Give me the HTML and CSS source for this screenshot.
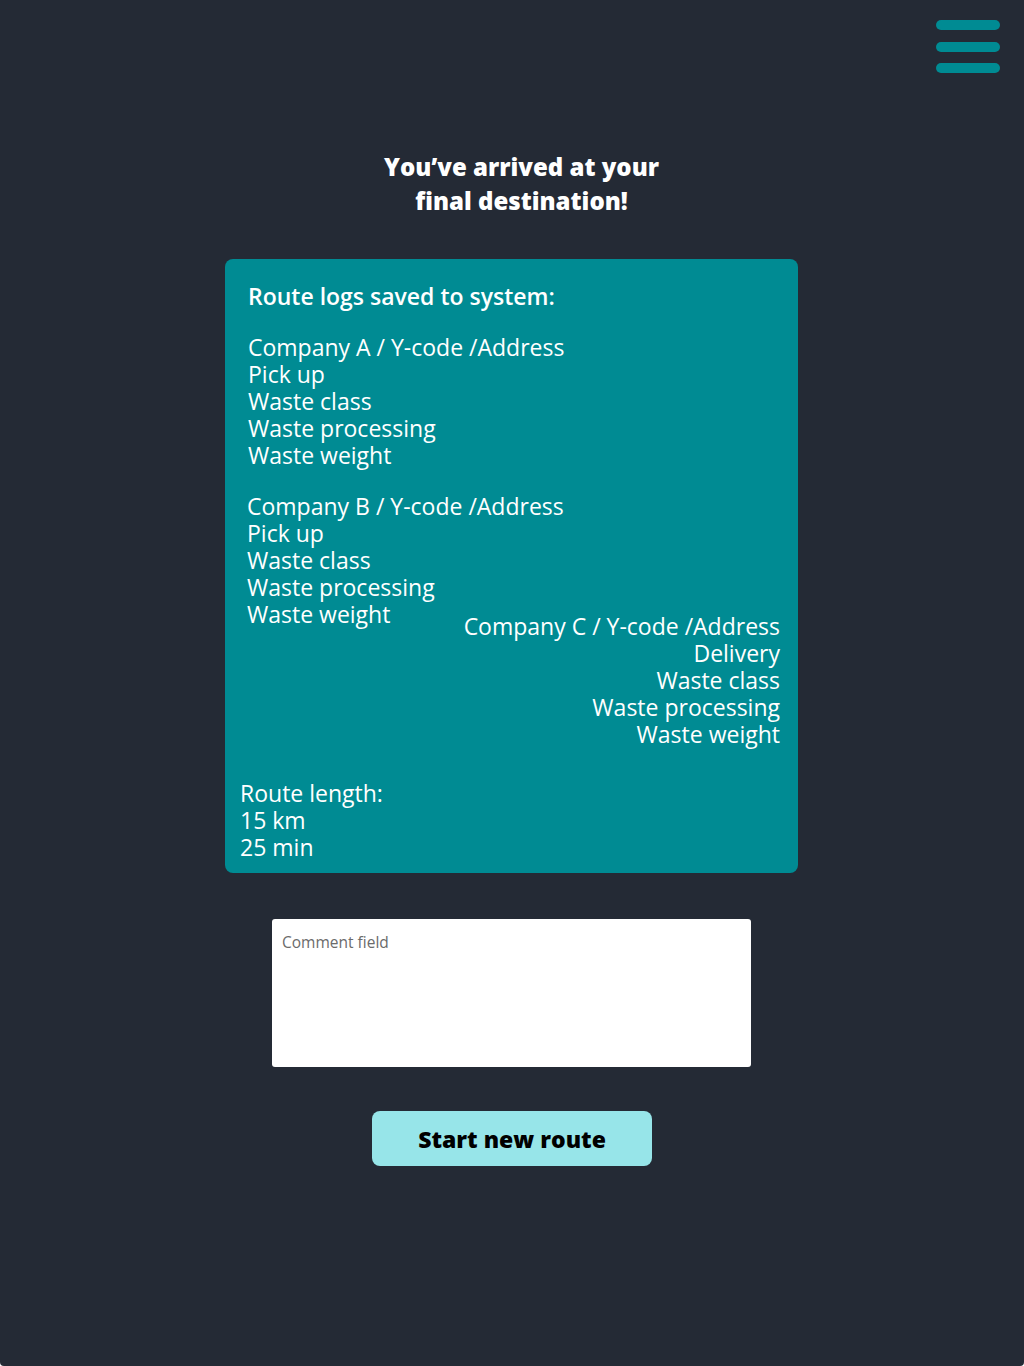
FILE: index.html
```html
<!DOCTYPE html>
<html lang="en">
<head>
<meta charset="utf-8">
<title>Route complete</title>
<link rel="stylesheet" href="styles.css">
</head>
<body>
<div class="screen">
  <header class="topbar">
    <button class="menu" aria-label="Menu">
      <span class="bar"></span>
      <span class="bar"></span>
      <span class="bar"></span>
    </button>
  </header>

  <h1 class="headline">You’ve arrived at your<br>final destination!</h1>

  <section class="card">
    <h2 class="card-title">Route logs saved to system:</h2>
    <div class="log log-a">
      <div>Company A / Y-code /Address</div>
      <div>Pick up</div>
      <div>Waste class</div>
      <div>Waste processing</div>
      <div>Waste weight</div>
    </div>
    <div class="log log-b">
      <div>Company B / Y-code /Address</div>
      <div>Pick up</div>
      <div>Waste class</div>
      <div>Waste processing</div>
      <div>Waste weight</div>
    </div>
    <div class="log log-c">
      <div>Company C / Y-code /Address</div>
      <div>Delivery</div>
      <div>Waste class</div>
      <div>Waste processing</div>
      <div>Waste weight</div>
    </div>
    <div class="log summary">
      <div>Route length:</div>
      <div>15 km</div>
      <div>25 min</div>
    </div>
  </section>

  <textarea class="comment" placeholder="Comment field"></textarea>

  <button class="primary">Start new route</button>
</div>
</body>
</html>
```

FILE: styles.css
```css
* { box-sizing: border-box; }

html, body {
  margin: 0;
  padding: 0;
  background: #ffffff;
}

body {
  font-family: "Open Sans", "Liberation Sans", sans-serif;
  color: #ffffff;
}

.screen {
  width: 1024px;
  height: 1366px;
  background: #242a35;
  border-radius: 0 0 4px 4px;
  display: flex;
  flex-direction: column;
  align-items: center;
}

.topbar {
  align-self: stretch;
  display: flex;
  justify-content: flex-end;
  padding: 20px 24px 0 0;
}

.menu {
  width: 64px;
  height: 53px;
  padding: 0;
  border: 0;
  background: none;
  display: flex;
  flex-direction: column;
  justify-content: space-between;
  cursor: pointer;
}

.menu .bar {
  display: block;
  width: 64px;
  height: 10px;
  border-radius: 5px;
  background: #008b93;
}

.headline {
  margin: 77px 0 0 19px;
  font-size: 24px;
  line-height: 34px;
  font-weight: 800;
  text-align: center;
  color: #ffffff;
}

.card {
  margin: 41px 1px 0 0;
  width: 573px;
  height: 614px;
  background: #008b93;
  border-radius: 8px;
  padding: 24px 18px 0 23px;
  display: flex;
  flex-direction: column;
}

.card-title {
  margin: 0;
  font-size: 23px;
  line-height: 27px;
  font-weight: 600;
}

.log {
  font-size: 23px;
  line-height: 27px;
  font-weight: 400;
}

.log-a { margin-top: 24px; }

.log-b {
  margin-top: 24px;
  margin-left: -1px;
}

.log-c {
  margin-top: -15px;
  align-self: flex-end;
  text-align: right;
}

.summary {
  margin-top: 32px;
  margin-left: -8px;
}

.comment {
  margin: 46px 1px 0 0;
  width: 479px;
  height: 148px;
  border: 0;
  border-radius: 3px;
  background: #ffffff;
  padding: 12px 10px;
  font-family: "Open Sans", "Liberation Sans", sans-serif;
  font-size: 15.5px;
  color: #333;
  resize: none;
  outline: none;
}

.comment::placeholder {
  color: #6b6b6b;
}

.primary {
  margin-top: 44px;
  width: 280px;
  height: 55px;
  border: 0;
  border-radius: 8px;
  background: #97e5e9;
  color: #000000;
  font-family: "Open Sans", "Liberation Sans", sans-serif;
  font-size: 23px;
  font-weight: 800;
  cursor: pointer;
}
```
